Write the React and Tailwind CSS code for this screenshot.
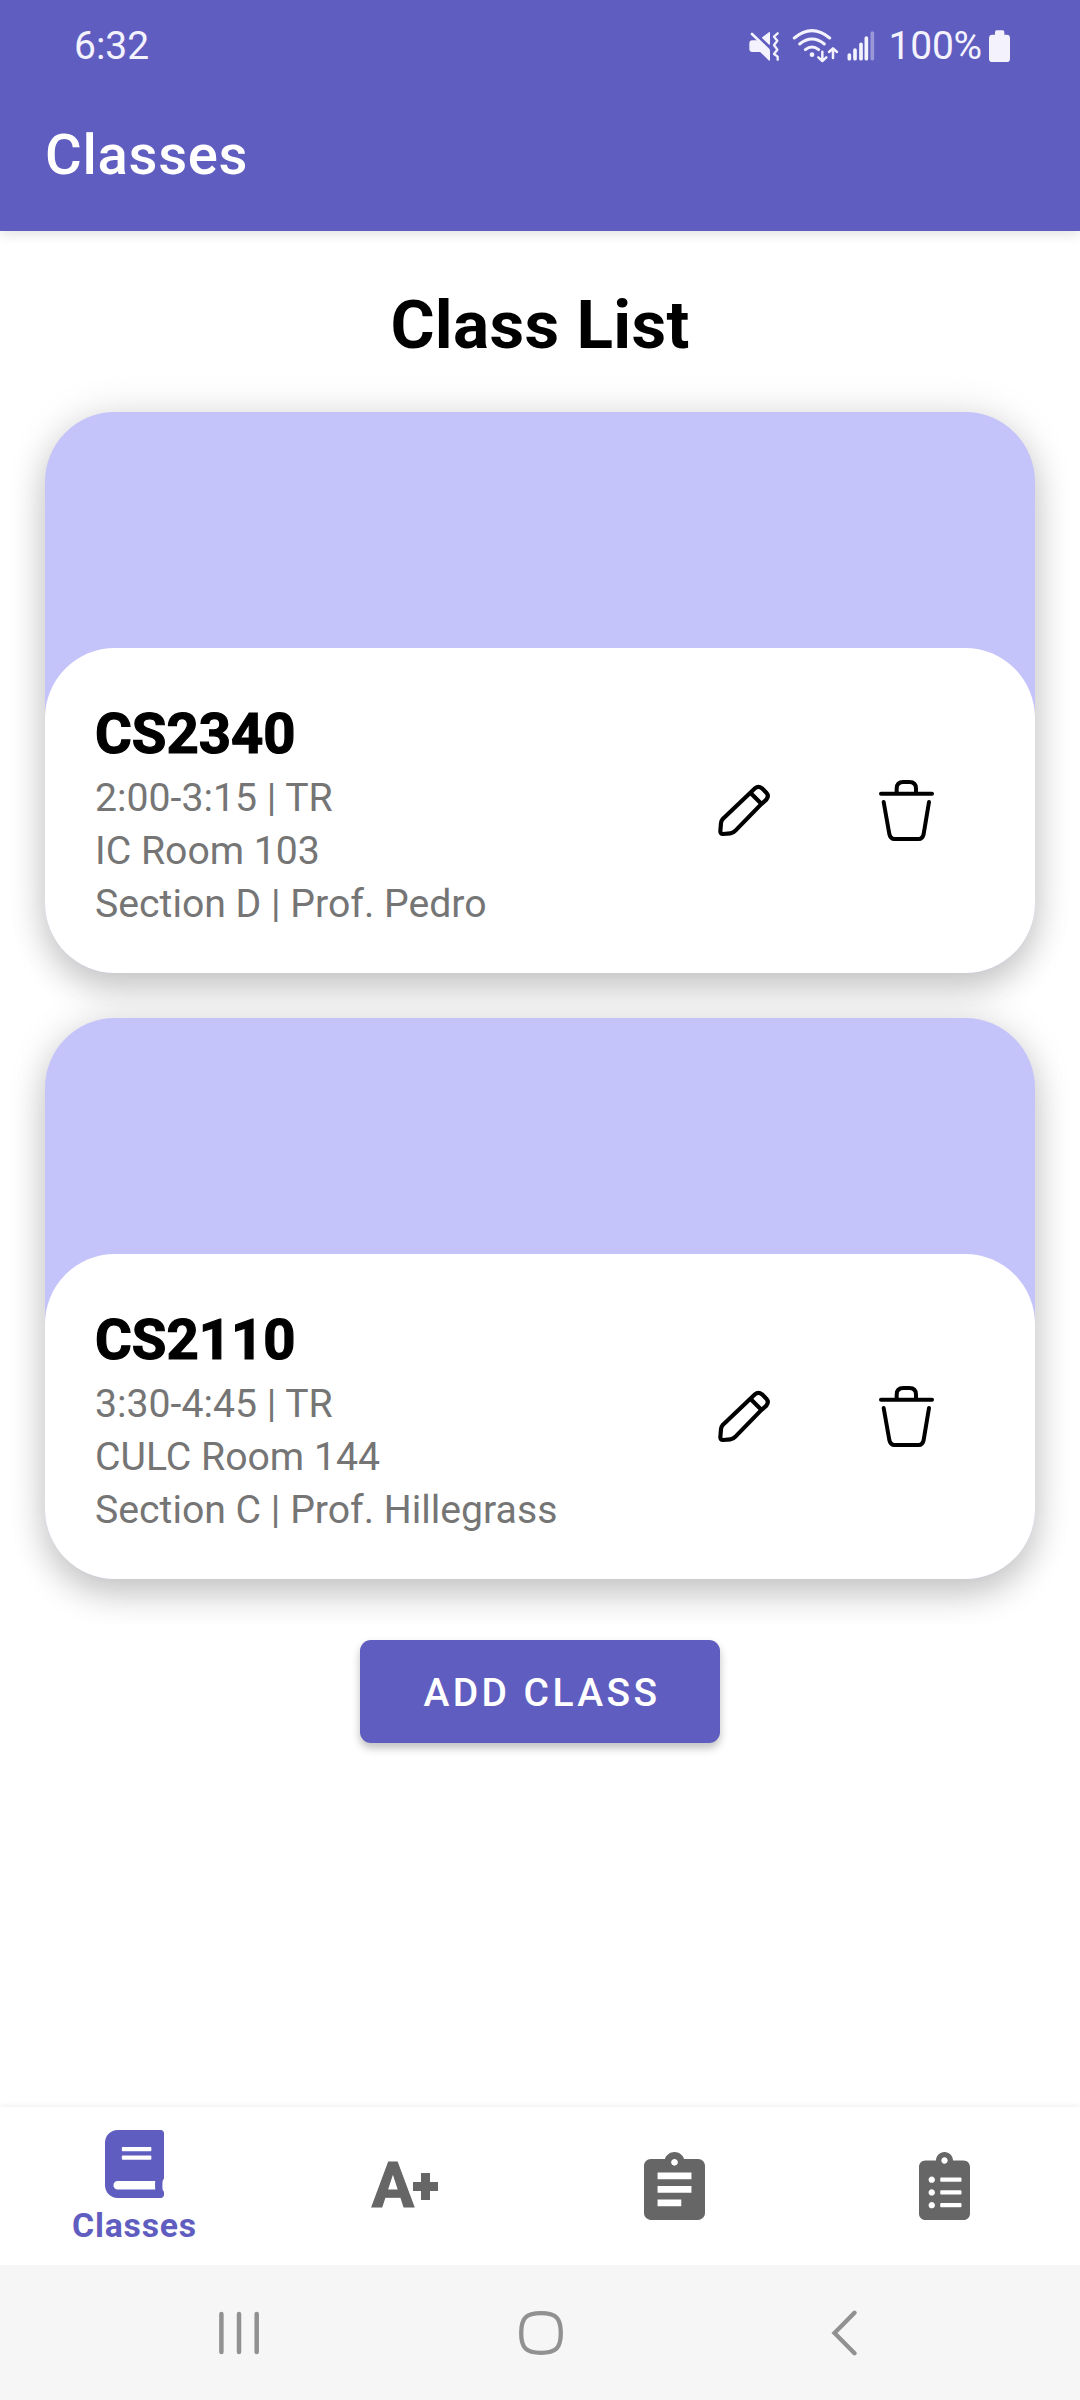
import React from "react";

const classes = [
  { name: "CS2340", lines: ["2:00-3:15 | TR", "IC Room 103", "Section D | Prof. Pedro"] },
  { name: "CS2110", lines: ["3:30-4:45 | TR", "CULC Room 144", "Section C | Prof. Hillegrass"] },
];

function StatusIcons() {
  return (
    <svg className="w-[130px] h-[36px]" viewBox="50 50 390 108" fill="none" stroke="#f3f2fd" strokeLinecap="round" strokeLinejoin="round">
      <path d="M66 92H84L117 121V149L90 123H66Q59 123 59 116V99Q59 92 66 92Z" fill="#f3f2fd" strokeWidth="4" />
      <path d="M97 82L117 67V101Z" fill="#f3f2fd" strokeWidth="4" />
      <path d="M65 71L114 118" strokeWidth="8" />
      <path d="M142 69L131 79L141 91L131 104L141 118L131 131L142 139V148" strokeWidth="7" />
      <path d="M192 83Q245 39 298 83" strokeWidth="9" />
      <path d="M208 101Q245 71 282 101" strokeWidth="9" />
      <path d="M225 118Q245 102 265 118" strokeWidth="9" />
      <circle cx="245" cy="133" r="7" fill="#f3f2fd" stroke="none" />
      <path d="M276 124V151M264 141L276 152L288 141M308 143V115M296 125L308 114L320 125" strokeWidth="7.5" />
      <path d="M357 134V145M374 119V145M392 102V145M408 83V145" strokeWidth="11" />
      <path d="M426 68V145" strokeWidth="11" opacity="0.4" />
    </svg>
  );
}

function Battery() {
  return (
    <svg className="w-[21px] h-[32px]" viewBox="0 0 63 96" fill="#f3f2fd">
      <path d="M18 14V6Q18 1 23 1H41Q46 1 46 6V14H53Q63 14 63 24V86Q63 96 53 96H10Q0 96 0 86V24Q0 14 10 14Z" />
    </svg>
  );
}

function Pencil() {
  return (
    <svg className="w-[54px] h-[55px]" viewBox="80 130 162 165" fill="none" stroke="#000" strokeWidth="12.5" strokeLinejoin="round">
      <path d="M180 159L194 146Q204 137 215 146L228 159Q237 169 228 180L212 194L136 272Q129 280 120 281L98 283Q90 283 90 275L92 250Q93 243 98 237Z" />
      <path d="M180 159L213 192" />
    </svg>
  );
}

function Trash() {
  return (
    <svg className="w-[60px] h-[65px]" viewBox="560 115 180 195" fill="none" stroke="#000" strokeWidth="12" strokeLinecap="round" strokeLinejoin="round">
      <path d="M572 162H725" />
      <path d="M619 160V147Q619 127 639 127H657Q677 127 677 147V160" />
      <path d="M580 187L597 283Q600 298 613 298H685Q697 298 700 283L716 187" />
    </svg>
  );
}

function ClassCard({ name, lines }) {
  return (
    <article className="h-[561px] shrink-0 rounded-[70px] bg-[#c4c4fa] pt-[236px] shadow-[0_0_42px_rgba(0,0,0,0.11),0_17px_34px_rgba(0,0,0,0.18)]">
      <div className="flex h-[325px] items-center rounded-[70px] bg-white pl-[50px] pr-[98px]">
        <div className="flex-1 pt-[10px]">
          <h2 className="mb-[4px] text-[56.25px] leading-[67px] font-bold text-black [-webkit-text-stroke:1.2px_#000]">{name}</h2>
          {lines.map((line) => (
            <p key={line} className="text-[39.2px] leading-[53px] text-[#757575]">{line}</p>
          ))}
        </div>
        <button className="mr-[106px]" aria-label="Edit"><Pencil /></button>
        <button aria-label="Delete"><Trash /></button>
      </div>
    </article>
  );
}

function BookIcon() {
  return (
    <svg className="h-[68px] w-[59px]" viewBox="0 0 448 512" preserveAspectRatio="none" fill="#5f5dc0">
      <path d="M448 360V24c0-13.300-10.700-24-24-24H96C43 0 0 43 0 96v320c0 53 43 96 96 96h328c13.300 0 24-10.700 24-24v-16c0-7.500-3.500-14.300-8.900-18.700-4.200-15.400-4.200-59.300 0-74.700 5.400-4.300 8.900-11.100 8.900-18.600zM128 134c0-3.300 2.700-6 6-6h212c3.300 0 6 2.700 6 6v20c0 3.300-2.700 6-6 6H134c-3.300 0-6-2.700-6-6v-20zm0 64c0-3.300 2.700-6 6-6h212c3.300 0 6 2.700 6 6v20c0 3.300-2.700 6-6 6H134c-3.300 0-6-2.700-6-6v-20zm253.400 250H96c-17.700 0-32-14.300-32-32 0-17.600 14.400-32 32-32h285.400c-1.900 17.100-1.900 46.900 0 64z" />
    </svg>
  );
}

function AssignmentIcon() {
  return (
    <svg className="h-[68px] w-[61px]" viewBox="3 1 18 20" fill="#666">
      <path d="M19 3h-4.180C14.400 1.840 13.300 1 12 1c-1.300 0-2.400.84-2.820 2H5c-1.100 0-2 .9-2 2v14c0 1.100.9 2 2 2h14c1.100 0 2-.9 2-2V5c0-1.100-.9-2-2-2zm-7 0c.55 0 1 .45 1 1s-.45 1-1 1-1-.45-1-1 .45-1 1-1zm2 14H7v-2h7v2zm3-4H7v-2h10v2zm0-4H7V7h10v2z" />
    </svg>
  );
}

function ListIcon() {
  return (
    <svg className="h-[68px] w-[51px]" viewBox="0 0 384 512" fill="#666">
      <path d="M336 64h-80c0-35.300-28.700-64-64-64s-64 28.700-64 64H48C21.500 64 0 85.500 0 112v352c0 26.500 21.500 48 48 48h288c26.500 0 48-21.500 48-48V112c0-26.500-21.500-48-48-48zM96 424c-13.300 0-24-10.700-24-24s10.700-24 24-24 24 10.700 24 24-10.700 24-24 24zm0-96c-13.300 0-24-10.700-24-24s10.700-24 24-24 24 10.700 24 24-10.700 24-24 24zm0-96c-13.300 0-24-10.700-24-24s10.700-24 24-24 24 10.700 24 24-10.700 24-24 24zm96-192c13.300 0 24 10.700 24 24s-10.700 24-24 24-24-10.700-24-24 10.700-24 24-24zm128 368c0 4.400-3.600 8-8 8H168c-4.400 0-8-3.600-8-8v-16c0-4.400 3.600-8 8-8h144c4.400 0 8 3.600 8 8v16zm0-96c0 4.400-3.600 8-8 8H168c-4.400 0-8-3.600-8-8v-16c0-4.400 3.600-8 8-8h144c4.400 0 8 3.600 8 8v16zm0-96c0 4.400-3.600 8-8 8H168c-4.400 0-8-3.600-8-8v-16c0-4.400 3.600-8 8-8h144c4.400 0 8 3.600 8 8v16z" />
    </svg>
  );
}

export default function App() {
  return (
    <div className="flex h-[2400px] w-[1080px] flex-col overflow-hidden bg-white font-['Roboto',sans-serif]">
      <header className="z-10 h-[231px] shrink-0 bg-[#5f5dc0] shadow-[0_4px_11px_rgba(0,0,0,0.11)]">
        <div className="flex h-[78px] items-start pt-[15px] pl-[74px] pr-[70px] text-[39px] leading-[62px] text-[#f3f2fd]">
          <span className="flex-1">6:32</span>
          <div className="mt-[12px] mr-[11px]"><StatusIcons /></div>
          <span className="mr-[7px] tracking-[-0.2px]">100%</span>
          <div className="mt-[15px]"><Battery /></div>
        </div>
        <h1 className="pl-[45px] text-[56.25px] leading-[154px] font-medium tracking-[0.7px] text-white">Classes</h1>
      </header>

      <main className="flex flex-1 flex-col">
        <h2 className="h-[136px] pt-[52px] text-center text-[67.5px] leading-[84px] font-bold tracking-[0.3px] text-black">Class List</h2>
        <section className="flex h-[1257px] flex-col gap-[45px] overflow-hidden p-[45px]">
          {classes.map((c) => <ClassCard key={c.name} {...c} />)}
        </section>
        <button className="mt-[16px] h-[103px] w-[360px] self-center rounded-[11px] bg-[#5f5dc0] pt-[4px] pl-[4px] text-[39px] leading-[99px] font-medium tracking-[3.4px] text-white shadow-[0_5px_9px_rgba(0,0,0,0.25)]">ADD CLASS</button>
      </main>

      <nav className="grid h-[158px] shrink-0 grid-cols-4 bg-white shadow-[0_-1px_6px_rgba(0,0,0,0.07)]">
        <div className="flex flex-col items-center pt-[23px] pr-[1px]">
          <BookIcon />
          <span className="mt-[8px] text-[33.75px] leading-[40px] font-bold tracking-[0.8px] text-[#5f5dc0]">Classes</span>
        </div>
        <div className="flex items-center justify-center text-[#666]">
          <span className="text-[63px] leading-[68px] font-bold [-webkit-text-stroke:1.2px_#666]">A</span>
          <svg className="-ml-px h-[27px] w-[25px]" viewBox="0 0 25 27" fill="currentColor" aria-label="+">
            <path d="M8 0H17V9H25V18H17V27H8V18H0V9H8Z" />
          </svg>
        </div>
        <div className="flex items-center justify-center pr-[1px]"><AssignmentIcon /></div>
        <div className="flex items-center justify-center pr-[1px]"><ListIcon /></div>
      </nav>

      <footer className="flex h-[135px] shrink-0 items-center bg-[#f6f6f6] pl-[218px] text-[#919191]">
        <svg className="h-[46px] w-[42px]" viewBox="0 0 42 46" stroke="currentColor" strokeWidth="4.5" strokeLinecap="round">
          <path d="M3.400 4V42M21 4V42M38.700 4V42" />
        </svg>
        <svg className="ml-[258px] h-[46px] w-[46px]" viewBox="0 0 46 46" fill="none" stroke="currentColor" strokeWidth="4.300">
          <path d="M23 3.200C38 3.200 42.800 8 42.800 23S38 42.800 23 42.800 3.200 38 3.200 23 8 3.200 23 3.200Z" />
        </svg>
        <svg className="ml-[266px] h-[46px] w-[28px]" viewBox="0 0 28 46" fill="none" stroke="currentColor" strokeWidth="4.300" strokeLinecap="round">
          <path d="M24.500 2.700L4.500 23L24.500 43.300" />
        </svg>
      </footer>
    </div>
  );
}
